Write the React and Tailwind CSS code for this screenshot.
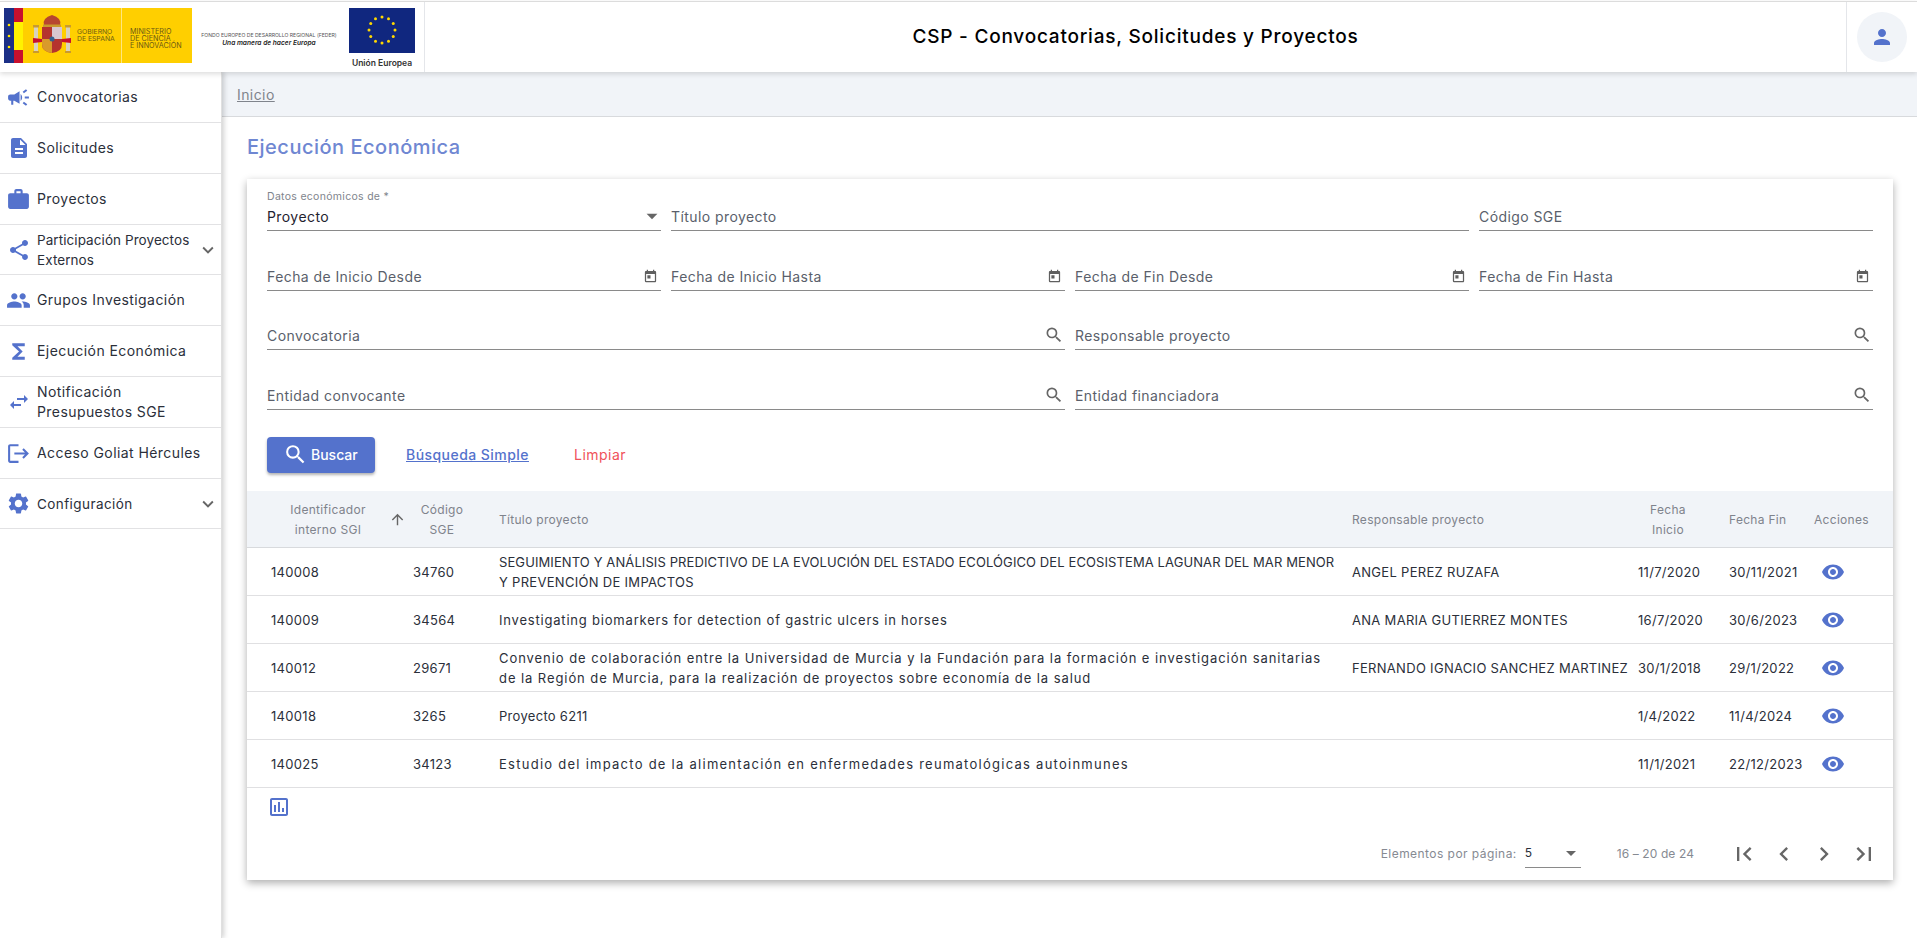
import React from "react";
import {
  MdCampaign, MdDescription, MdWork, MdShare, MdPeople, MdFunctions, MdSwapHoriz, MdLogout, MdSettings,
  MdExpandMore, MdArrowDropDown, MdToday, MdSearch, MdArrowUpward, MdVisibility, MdOutlineInsertChart,
  MdFirstPage, MdChevronLeft, MdChevronRight, MdLastPage, MdPerson,
} from "react-icons/md";

const font = "font-['Inter','Liberation_Sans',sans-serif]";

function Logos() {
  return (
    <div className="flex items-start w-[425px] h-full shrink-0 border-r border-[#e4e6ea]">
      <svg width="188" height="55" viewBox="0 0 188 55" className="ml-[4px] mt-[6px] shrink-0">
        <rect width="188" height="55" fill="#ffcf00" />
        <rect width="10" height="55" fill="#1b2f86" />
        <rect x="10" width="9" height="55" fill="#c8102e" />
        <rect x="10" y="14" width="9" height="28" fill="#fff200" />
        <circle cx="5" cy="17" r="1.3" fill="#ffe600" /><circle cx="5" cy="28" r="1.3" fill="#ffe600" /><circle cx="5" cy="39" r="1.3" fill="#ffe600" />
        <rect x="117" width="1" height="55" fill="#ffe680" />
        <rect x="30" y="19" width="4" height="25" fill="#d8d2bf" />
        <rect x="62" y="19" width="4" height="25" fill="#d8d2bf" />
        <rect x="29" y="17" width="6" height="2.500" fill="#c99a2e" />
        <rect x="61" y="17" width="6" height="2.500" fill="#c99a2e" />
        <rect x="29" y="43" width="6" height="2" fill="#c99a2e" />
        <rect x="61" y="43" width="6" height="2" fill="#c99a2e" />
        <path d="M29 30l9 1v3l-9 1zM67 30l-9 1v3l9 1z" fill="#c8102e" />
        <path d="M38 19h20v17q0 8-10 9q-10-1-10-9z" fill="#b5332e" />
        <path d="M48 19h10v12h-10z" fill="#d9c6d0" />
        <path d="M38 31h10v14q-10-1-10-9z" fill="#d99a2b" />
        <circle cx="48" cy="31" r="2.500" fill="#35608f" />
        <path d="M40 17q-2-7 8-10q10 3 8 10z" fill="#b7462f" />
        <path d="M39 16.500h18v2.500h-18z" fill="#c99a2e" />
        <text x="73" y="26" fontSize="6.800" fill="#6b5a14" fontFamily="Inter">GOBIERNO</text>
        <text x="73" y="33" fontSize="6.800" fill="#6b5a14" fontFamily="Inter">DE ESPAÑA</text>
        <text x="126" y="26" fontSize="7.200" fill="#6b5a14" fontFamily="Inter">MINISTERIO</text>
        <text x="126" y="33" fontSize="7.200" fill="#6b5a14" fontFamily="Inter">DE CIENCIA</text>
        <text x="126" y="40" fontSize="7.200" fill="#6b5a14" fontFamily="Inter">E INNOVACIÓN</text>
      </svg>
      <div className={`w-[136px] ml-[9px] mt-[29px] text-center text-[#222] shrink-0 ${font}`}>
        <div className="text-[5.100px] leading-[8px] text-[#555] whitespace-nowrap">FONDO EUROPEO DE DESARROLLO REGIONAL (FEDER)</div>
        <div className="text-[6.600px] leading-[9px] italic font-semibold whitespace-nowrap">Una manera de hacer Europa</div>
      </div>
      <div className="ml-[12px] mt-[6px] w-[66px] shrink-0">
        <svg width="66" height="45" viewBox="0 0 66 45" className="block">
          <rect width="66" height="45" fill="#10277f" />
          {Array.from({ length: 12 }).map((_, i) => {
            const a = (i * Math.PI) / 6;
            return <circle key={i} cx={33 + 13 * Math.sin(a)} cy={22 - 13 * Math.cos(a)} r="1.500" fill="#ffd800" />;
          })}
        </svg>
        <div className={`text-[8.500px] leading-[10px] mt-[5px] font-semibold text-[#333] whitespace-nowrap text-center ${font}`}>Unión Europea</div>
      </div>
    </div>
  );
}

const nav = [
  { icon: <MdCampaign size={25} />, label: "Convocatorias", h: 51 },
  { icon: <MdDescription size={24} />, label: "Solicitudes", h: 51 },
  { icon: <MdWork size={25} />, label: "Proyectos", h: 51 },
  { icon: <MdShare size={24} />, label: <span className="tracking-[0.07px]">Participación Proyectos<br />Externos</span>, h: 50, chevron: true, small: true },
  { icon: <MdPeople size={25} />, label: "Grupos Investigación", h: 51 },
  { icon: <MdFunctions size={25} />, label: "Ejecución Económica", h: 51 },
  { icon: <MdSwapHoriz size={24} />, label: <>Notificación<br />Presupuestos SGE</>, h: 51 },
  { icon: <MdLogout size={25} />, label: "Acceso Goliat Hércules", h: 51 },
  { icon: <MdSettings size={25} />, label: "Configuración", h: 50, chevron: true, small: true },
];

function Sidebar() {
  return (
    <aside className="w-[222px] shrink-0 bg-white border-r border-[#e0e0e0] shadow-[2px_0_5px_rgba(0,0,0,0.18)] z-10">
      {nav.map((n, i) => (
        <div key={i} style={{ height: n.h }} className="flex items-center border-b border-[#e2e2e4] pl-[6px] pr-[6px]">
          <span className="w-[25px] h-[25px] flex items-center justify-center text-[#5472cc] shrink-0">{n.icon}</span>
          <span className={`ml-[6px] flex-1 whitespace-nowrap text-[#2b2f3a] ${n.small ? "text-[13.500px]" : "text-[14px]"} leading-[20px] tracking-[0.42px]`}>{n.label}</span>
          {n.chevron && <MdExpandMore size={22} className="text-[#666] shrink-0 -mr-[4px]" />}
        </div>
      ))}
    </aside>
  );
}

function Field({ label, icon, className = "" }) {
  return (
    <div className={`h-[50px] flex items-end border-b border-[#8a8a8a] pb-[2px] ${className}`}>
      <span className="flex-1 text-[14px] leading-[22px] tracking-[0.42px] text-[#5a5f6b]">{label}</span>
      {icon}
    </div>
  );
}

const Cal = <MdToday size={15} className="text-[#5f5f5f] mb-[4px] mr-[3px]" />;
const Sea = <MdSearch size={20} className="text-[#666] mb-[2px] mr-[1px]" />;

const rows = [
  ["140008", "34760", <><span className="tracking-[0.1px]">SEGUIMIENTO Y ANÁLISIS PREDICTIVO DE LA EVOLUCIÓN DEL ESTADO ECOLÓGICO DEL ECOSISTEMA LAGUNAR DEL MAR MENOR</span><br />Y PREVENCIÓN DE IMPACTOS</>, "ANGEL PEREZ RUZAFA", "11/7/2020", "30/11/2021"],
  ["140009", "34564", <span className="tracking-[0.8px]">Investigating biomarkers for detection of gastric ulcers in horses</span>, "ANA MARIA GUTIERREZ MONTES", "16/7/2020", "30/6/2023"],
  ["140012", "29671", <><span className="tracking-[0.94px]">Convenio de colaboración entre la Universidad de Murcia y la Fundación para la formación e investigación sanitarias</span><br /><span className="tracking-[0.92px]">de la Región de Murcia, para la realización de proyectos sobre economía de la salud</span></>, "FERNANDO IGNACIO SANCHEZ MARTINEZ", "30/1/2018", "29/1/2022"],
  ["140018", "3265", "Proyecto 6211", "", "1/4/2022", "11/4/2024"],
  ["140025", "34123", <span className="tracking-[1.26px]">Estudio del impacto de la alimentación en enfermedades reumatológicas autoinmunes</span>, "", "11/1/2021", "22/12/2023"],
];

function Table() {
  const th = "font-normal text-[12px] leading-[20px] tracking-[0.3px] text-[#7f838c] align-middle pt-[2px]";
  const td = "text-[13px] leading-[20px] tracking-[0.3px] text-[#2b2f3a] align-middle p-0 pt-[2px] whitespace-nowrap";
  return (
    <table className="w-[1646px] table-fixed">
      <thead>
        <tr className="h-[56px] bg-[#f1f4f8] border-b border-[#d8dadd]">
          <th className={`w-[166px] ${th}`}>
            <div className="flex items-center">
              <span className="w-[138px] pl-[24px] text-center block">Identificador interno SGI</span>
              <MdArrowUpward size={17} className="ml-[4px] text-[#666]" />
            </div>
          </th>
          <th className={`w-[86px] ${th} text-center`}><span className="block w-[58px]">Código SGE</span></th>
          <th className={`w-[853px] ${th} text-left`}>Título proyecto</th>
          <th className={`w-[286px] ${th} text-left`}>Responsable proyecto</th>
          <th className={`w-[91px] ${th} text-left`}><span className="block w-[60px] text-center">Fecha Inicio</span></th>
          <th className={`w-[85px] ${th} text-left`}>Fecha Fin</th>
          <th className={`w-[79px] ${th} text-left`}>Acciones</th>
        </tr>
      </thead>
      <tbody>
        {rows.map((r) => (
          <tr key={r[0]} className="h-[48px] border-b border-[#e0e0e2]">
            <td className={`${td} pl-[24px]`}>{r[0]}</td>
            <td className={td}>{r[1]}</td>
            <td className={td}>{r[2]}</td>
            <td className={`${td} tracking-[0.2px]`}>{r[3]}</td>
            <td className={td}>{r[4]}</td>
            <td className={td}>{r[5]}</td>
            <td className={td}><MdVisibility size={24} className="text-[#5472cc] ml-[7px]" /></td>
          </tr>
        ))}
      </tbody>
    </table>
  );
}

export default function App() {
  return (
    <div className={`w-[1917px] h-[938px] overflow-hidden bg-white flex flex-col ${font}`}>
      <header className="h-[71px] shrink-0 flex items-stretch bg-white border-t border-[#dcdcdc] mt-[1px] shadow-[0_2px_5px_rgba(0,0,0,0.14)] z-20">
        <Logos />
        <h1 className="flex-1 flex items-center justify-center text-[19px] font-medium tracking-[0.78px] text-black">CSP - Convocatorias, Solicitudes y Proyectos</h1>
        <div className="w-[71px] shrink-0 border-l border-[#e4e6ea] flex items-center pl-[10px]">
          <div className="w-[50px] h-[50px] rounded-full bg-[#f1f4f8] flex items-center justify-center text-[#5472cc]">
            <MdPerson size={24} />
          </div>
        </div>
      </header>
      <div className="flex flex-1 min-h-0">
        <Sidebar />
        <main className="flex-1 min-w-0">
          <div className="h-[45px] bg-[#f1f4f8] border-b border-[#d8dadd] flex items-center pl-[15px]">
            <span className="text-[14px] tracking-[0.42px] text-[#80848c] underline">Inicio</span>
          </div>
          <h2 className="ml-[25px] mt-[15px] text-[20px] leading-[30px] font-medium tracking-[0.5px] text-[#6f87d2]">Ejecución Económica</h2>
          <section className="ml-[25px] mt-[17px] w-[1646px] h-[701px] bg-white shadow-[0_3px_8px_rgba(0,0,0,0.32)]">
            <div className="h-[312px] px-[20px] pt-[2px]">
              <div className="grid grid-cols-4 gap-x-[10px] gap-y-[9.500px]">
                <div className="relative h-[50px] flex items-end border-b border-[#8a8a8a] pb-[2px]">
                  <span className="absolute left-0 top-[9px] text-[10.500px] leading-[14px] tracking-[0.3px] text-[#80848c]">Datos económicos de *</span>
                  <span className="flex-1 text-[14px] leading-[22px] tracking-[0.42px] text-[#1f2330]">Proyecto</span>
                  <MdArrowDropDown size={26} className="text-[#666] -mb-[1px] -mr-[4px]" />
                </div>
                <Field label="Título proyecto" className="col-span-2" />
                <Field label="Código SGE" />
                <Field label="Fecha de Inicio Desde" icon={Cal} />
                <Field label="Fecha de Inicio Hasta" icon={Cal} />
                <Field label="Fecha de Fin Desde" icon={Cal} />
                <Field label="Fecha de Fin Hasta" icon={Cal} />
                <Field label="Convocatoria" icon={Sea} className="col-span-2" />
                <Field label="Responsable proyecto" icon={Sea} className="col-span-2" />
                <Field label="Entidad convocante" icon={Sea} className="col-span-2" />
                <Field label="Entidad financiadora" icon={Sea} className="col-span-2" />
              </div>
              <div className="flex items-center mt-[27px]">
                <button className="w-[108px] h-[36px] rounded-[4px] bg-[#5472cc] text-white text-[14px] font-medium flex items-center pl-[16px] gap-[3px] shadow-[0_2px_3px_rgba(0,0,0,0.3)]">
                  <MdSearch size={25} />Buscar
                </button>
                <span className="ml-[31px] text-[14px] font-medium tracking-[0.45px] text-[#5472cc] underline">Búsqueda Simple</span>
                <span className="ml-[45px] text-[14px] tracking-[0.5px] text-[#f0525a]">Limpiar</span>
              </div>
            </div>
            <Table />
            <div className="h-[39px] pl-[20px] pt-[7px]">
              <MdOutlineInsertChart size={24} className="text-[#5472cc]" />
            </div>
            <div className="flex items-center justify-end pr-[15px] h-[50px] pt-[4px]">
              <span className="text-[12px] tracking-[0.45px] text-[#868a92]">Elementos por página:</span>
              <div className="ml-[8px] w-[56px] h-[28px] border-b border-[#8a8a8a] flex items-center justify-between text-[12px] text-[#2b2f3a]">
                <span>5</span><MdArrowDropDown size={24} className="text-[#666] -mr-[2px]" />
              </div>
              <span className="ml-[36px] text-[12px] tracking-[0.1px] text-[#868a92]">16 – 20 de 24</span>
              <div className="ml-[36px] flex items-center gap-[12px] text-[#666]">
                <MdFirstPage size={28} /><MdChevronLeft size={28} /><MdChevronRight size={28} /><MdLastPage size={28} />
              </div>
            </div>
          </section>
        </main>
      </div>
    </div>
  );
}
